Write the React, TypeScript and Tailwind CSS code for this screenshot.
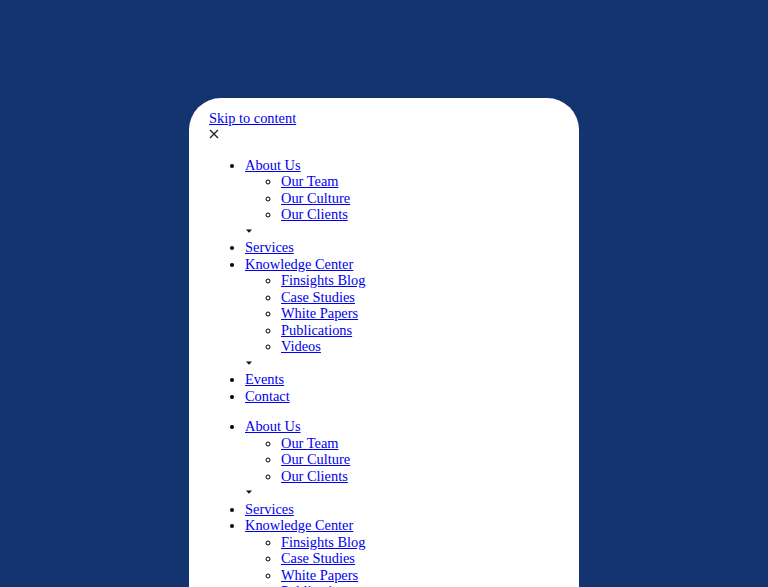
import React from 'react';

type NavItem = { label: string; children?: string[] };

const NAV: NavItem[] = [
  { label: 'About Us', children: ['Our Team', 'Our Culture', 'Our Clients'] },
  { label: 'Services' },
  {
    label: 'Knowledge Center',
    children: ['Finsights Blog', 'Case Studies', 'White Papers', 'Publications', 'Videos'],
  },
  { label: 'Events' },
  { label: 'Contact' },
];

function Caret() {
  return (
    <div className="h-[16.5px] flex items-center pl-[1px]">
      <svg width="6" height="4" viewBox="0 0 6 4" aria-hidden>
        <path d="M0 0.5h6L3 3.8z" fill="#111" />
      </svg>
    </div>
  );
}

function NavList() {
  return (
    <ul className="list-disc pl-[36px] my-[14px]">
      {NAV.map((item) => (
        <li key={item.label}>
          <a href="#" className="text-[#0000ee] underline">
            {item.label}
          </a>
          {item.children && (
            <>
              <ul className="list-[circle] pl-[36px]">
                {item.children.map((c) => (
                  <li key={c}>
                    <a href="#" className="text-[#0000ee] underline">
                      {c}
                    </a>
                  </li>
                ))}
              </ul>
              <Caret />
            </>
          )}
        </li>
      ))}
    </ul>
  );
}

export default function App() {
  return (
    <div className="h-screen overflow-hidden bg-[#14346f] pt-[98px] flex justify-center">
      <div
        className="w-[390px] h-[700px] bg-white rounded-t-[32px] px-[20px] pt-[11.5px] text-black text-[14.4px] leading-[16.5px]"
        style={{ fontFamily: '"Liberation Serif", "Times New Roman", serif' }}
      >
        <a href="#" className="text-[#0000ee] underline block w-fit">
          Skip to content
        </a>
        <div className="h-[16.5px] flex items-center">
          <svg width="10" height="10" viewBox="0 0 10 10" aria-hidden>
            <path d="M1 1l8 8M9 1l-8 8" stroke="#222" strokeWidth="1.3" />
          </svg>
        </div>
        <NavList />
        <NavList />
      </div>
    </div>
  );
}
